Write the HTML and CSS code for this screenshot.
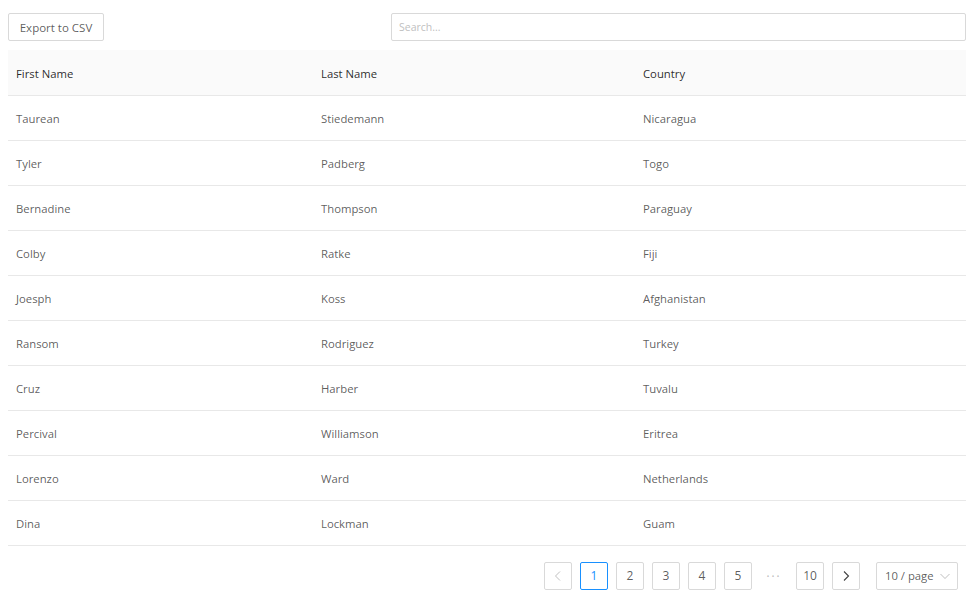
FILE: index.html
```html
<!DOCTYPE html>
<html>
<head>
<meta charset="utf-8">
<link rel="stylesheet" href="styles.css">
</head>
<body>
<div class="page">
  <div class="toolbar">
    <button class="btn">Export to CSV</button>
    <input class="search" type="text" placeholder="Search...">
  </div>
  <table class="table">
    <colgroup><col class="c1"><col class="c2"><col class="c3"></colgroup>
    <thead>
      <tr><th>First Name</th><th>Last Name</th><th>Country</th></tr>
    </thead>
    <tbody>
      <tr><td>Taurean</td><td>Stiedemann</td><td>Nicaragua</td></tr>
      <tr><td>Tyler</td><td>Padberg</td><td>Togo</td></tr>
      <tr><td>Bernadine</td><td>Thompson</td><td>Paraguay</td></tr>
      <tr><td>Colby</td><td>Ratke</td><td>Fiji</td></tr>
      <tr><td>Joesph</td><td>Koss</td><td>Afghanistan</td></tr>
      <tr><td>Ransom</td><td>Rodriguez</td><td>Turkey</td></tr>
      <tr><td>Cruz</td><td>Harber</td><td>Tuvalu</td></tr>
      <tr><td>Percival</td><td>Williamson</td><td>Eritrea</td></tr>
      <tr><td>Lorenzo</td><td>Ward</td><td>Netherlands</td></tr>
      <tr><td>Dina</td><td>Lockman</td><td>Guam</td></tr>
    </tbody>
  </table>
  <div class="pagination">
    <span class="pg-item disabled"><svg width="12" height="12" viewBox="0 0 12 12"><path d="M8 1.5 L3.5 6 L8 10.5" fill="none" stroke="currentColor" stroke-width="1"/></svg></span>
    <span class="pg-item active">1</span>
    <span class="pg-item">2</span>
    <span class="pg-item">3</span>
    <span class="pg-item">4</span>
    <span class="pg-item">5</span>
    <span class="pg-ellipsis">•••</span>
    <span class="pg-item">10</span>
    <span class="pg-item next"><svg width="12" height="12" viewBox="0 0 12 12"><path d="M4 1.5 L8.5 6 L4 10.5" fill="none" stroke="currentColor" stroke-width="1.1"/></svg></span>
    <span class="pg-size">10 / page<svg width="12" height="12" viewBox="0 0 12 12"><path d="M1.5 4 L6 8.5 L10.5 4" fill="none" stroke="currentColor" stroke-width="1"/></svg></span>
  </div>
</div>
</body>
</html>
```
FILE: styles.css
```css
* { box-sizing: border-box; }
html, body { margin: 0; padding: 0; background: #fff; }
body {
  font-family: "Open Sans", "Noto Sans", sans-serif;
  font-size: 11.3px;
  color: rgba(0,0,0,0.65);
}
.page { padding: 13px 9px 0 8px; }
.toolbar {
  display: flex;
  justify-content: space-between;
  align-items: center;
  height: 28px;
}
.btn {
  height: 28px;
  width: 96px;
  padding: 0;
  background: #fff;
  border: 1px solid #d9d9d9;
  border-radius: 2px;
  font-family: inherit;
  font-size: 11.5px;
  color: rgba(0,0,0,0.65);
}
.search {
  width: 575px;
  height: 28px;
  border: 1px solid #d9d9d9;
  border-radius: 2px;
  padding: 0 7px;
  font-family: inherit;
  font-size: 10.5px;
  color: rgba(0,0,0,0.65);
  outline: none;
}
.search::placeholder { color: #bfbfbf; }
.table {
  margin-top: 9px;
  width: 958px;
  border-collapse: collapse;
  table-layout: fixed;
}
.c1 { width: 305px; }
.c2 { width: 322px; }
.c3 { width: 331px; }
.table th, .table td {
  text-align: left;
  padding: 2px 8px 0 8px;
  height: 45px;
  border-bottom: 1px solid #e8e8e8;
  white-space: nowrap;
}
.table th {
  background: #fafafa;
  font-weight: 500;
  color: rgba(0,0,0,0.85);
}
.pagination {
  display: flex;
  justify-content: flex-end;
  align-items: center;
  margin-top: 16px;
  padding-right: 8px;
  gap: 8px;
}
.pg-item, .pg-ellipsis {
  width: 28px;
  height: 28px;
  display: flex;
  align-items: center;
  justify-content: center;
  border: 1px solid #d9d9d9;
  border-radius: 2px;
  color: rgba(0,0,0,0.65);
  background: #fff;
  font-size: 12px;
}
.pg-item.disabled { color: rgba(0,0,0,0.25); }
.pg-item.next { color: rgba(0,0,0,0.75); }
.pg-item.active { border-color: #1890ff; color: #1890ff; }
.pg-ellipsis {
  border: none;
  color: rgba(0,0,0,0.25);
  font-size: 8px;
  letter-spacing: 2px;
}
.pg-size {
  margin-left: 8px;
  width: 82px;
  height: 28px;
  border: 1px solid #d9d9d9;
  border-radius: 2px;
  display: flex;
  align-items: center;
  justify-content: space-between;
  padding: 0 6px 0 8px;
  color: rgba(0,0,0,0.65);
}
.pg-size svg { color: rgba(0,0,0,0.25); }
```
